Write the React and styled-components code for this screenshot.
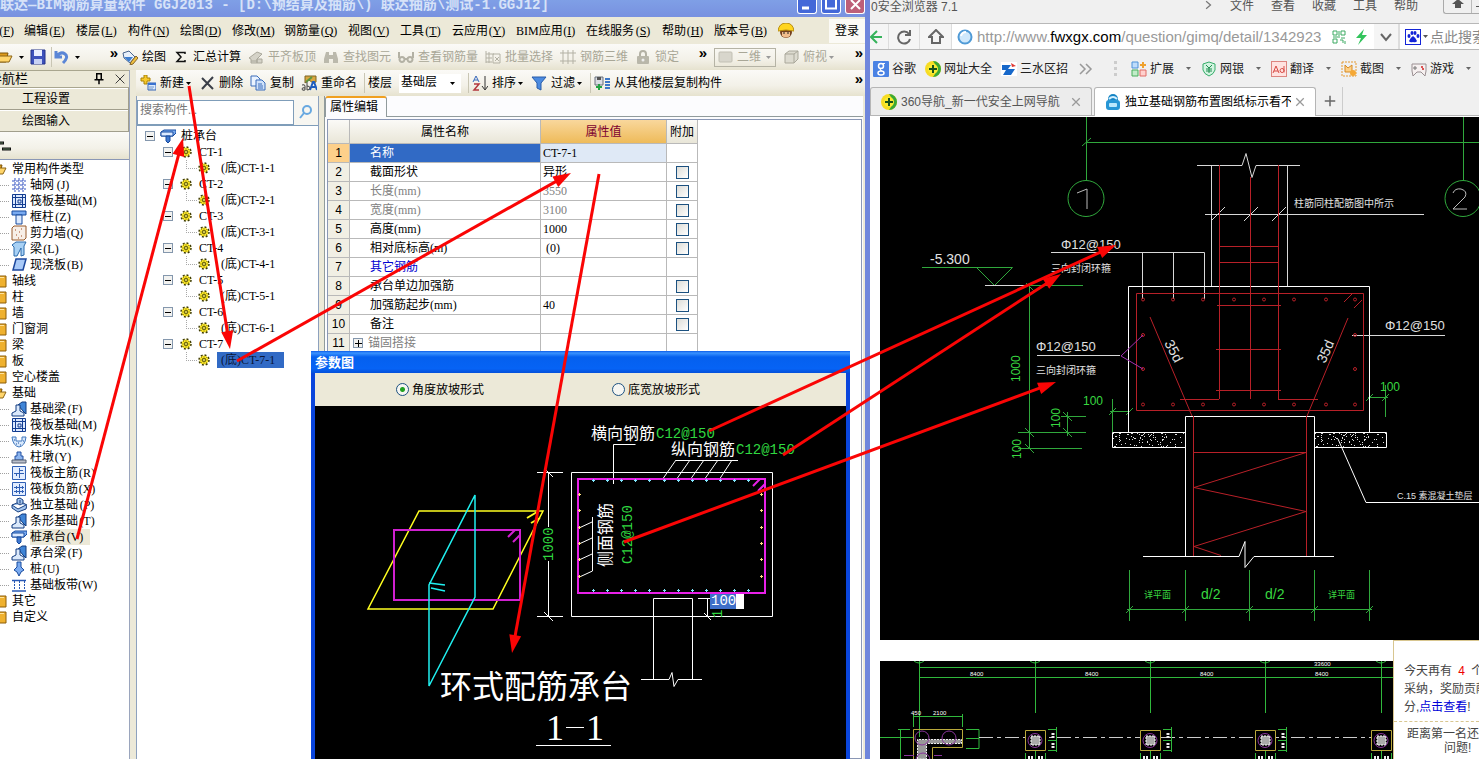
import { useState } from "react";
import styled, { createGlobalStyle, css } from "styled-components";

const GlobalStyle = createGlobalStyle`
	* {
		box-sizing: border-box;
	}
	body {
		margin: 0;
		overflow: hidden;
		font-family: "Liberation Serif", "Noto Sans CJK SC", serif;
		font-size: 12px;
		line-height: 16px;
		color: #000;
	}
	button, input, select {
		font: inherit;
		color: inherit;
	}
	button {
		padding: 0;
		border: 0;
		background: none;
		white-space: nowrap;
	}
	svg {
		display: block;
		flex: none;
	}
`;

const Desktop = styled.div`
	position: relative;
	display: grid;
	grid-template-columns: minmax(0, 870fr) minmax(0, 609fr);
	height: 100vh;
	overflow: hidden;
`;

/* ---------- modelling application ---------- */

const AppWindow = styled.section`
	position: relative;
	display: flex;
	flex-direction: column;
	min-height: 0;
	background: #ece9d8;
	border-right: 5px solid #6f86dc;
	overflow: hidden;
`;
const TitleBar = styled.header`
	display: flex;
	justify-content: space-between;
	flex: none;
	height: 17px;
	background: linear-gradient(#7f9fe6, #7891e0);
	overflow: hidden;
`;
const TitleText = styled.div`
	font: bold 14px/10px "Liberation Mono", "Noto Sans CJK SC", monospace;
	color: #d6e2f8;
	white-space: nowrap;
`;
const CaptionButtons = styled.div`
	display: flex;
	gap: 4px;
`;
const CaptionButton = styled.button`
	display: flex;
	justify-content: center;
	width: 20px;
	height: 14px;
	border: 1px solid #fff;
	border-top: 0;
	border-radius: 0 0 3px 3px;
	background: ${(p) => (p.$close ? "#bd5f78" : "#4468d8")};
`;
const MenuBar = styled.nav`
	display: flex;
	flex: none;
	align-items: center;
	gap: 10px;
	height: 27px;
	background: #ece9d8;
	overflow: hidden;
`;
const MenuItem = styled.button`
	display: flex;
	flex: none;
	width: ${(p) => p.$units * 6}px;
`;
const Mnemonic = styled.span`
	width: 18px;
	text-align: center;
`;
const FirstMenu = styled(MenuItem)`
	justify-content: flex-end;
	width: 14px;
`;
const Login = styled.button`
	height: 24px;
	margin-left: auto;
	padding: 0 6px;
	background: #fbfaf6;
`;
const Strip = styled.div`
	display: flex;
	flex: none;
	align-items: center;
	height: 26px;
	background: linear-gradient(#fbfaf7, #f3f1e8 60%, #e6e2cf);
	white-space: nowrap;
	overflow: hidden;
`;
const QuickTools = styled.div`
	display: flex;
	align-items: center;
	gap: 5px;
	width: 118px;
`;
const MainTools = styled.div`
	display: flex;
	flex: 1;
	align-items: center;
	gap: 7px;
	padding: 0 2px 0 4px;
`;
const Tool = styled.button`
	display: flex;
	align-items: center;
	gap: 4px;
	color: ${(p) => (p.disabled ? "#a9a797" : "#000")};
`;
const ToolCaret = styled.span`
	margin-left: -3px;
`;
const More = styled.button`
	margin-left: auto;
	padding-bottom: 8px;
	font: bold 15px/12px "Liberation Sans", sans-serif;
`;
const Separator = styled.i`
	width: 1px;
	height: 20px;
	margin-right: -4px;
	background: #c9c6b4;
`;
const ViewBox = styled(Tool)`
	height: 19px;
	padding: 0 3px 0 2px;
	border: 1px solid #b5b3a5;
`;
const FloorSelect = styled.select`
	width: 62px;
	height: 19px;
	padding: 0 0 3px 2px;
	border: 0;
	border-radius: 0;
	background: #fff;
	appearance: none;
`;
const FloorWrap = styled.span`
	display: flex;
	align-items: center;
	background: #fff;

	svg {
		margin-left: -12px;
		margin-right: 5px;
		pointer-events: none;
	}
`;
const Body = styled.div`
	display: flex;
	flex: 1;
	min-height: 0;
`;

const Nav = styled.aside`
	display: flex;
	flex-direction: column;
	width: 130px;
	border-right: 1px solid #9aa5bd;
	background: #ece9d8;
	white-space: nowrap;
	overflow: hidden;
`;
const NavTitle = styled.div`
	display: flex;
	align-items: center;
	height: 18px;
	padding-right: 4px;
	border: 1px solid #a9a68f;
	border-width: 1px 0 1px 0;
	font-size: 13px;

	span {
		margin-left: -11px;
	}
	svg:first-of-type {
		margin-left: auto;
		margin-right: 10px;
	}
`;
const NavButton = styled.button`
	height: 22px;
	padding-right: 58px;
	border: 1px solid #a19e8c;
	border-width: 0 1px 1px 0;
	box-shadow: inset 0 1px #fff;
	text-align: right;
`;
const NavStrip = styled(Strip)`
	height: 27px;
`;
const NavList = styled.ul`
	flex: 1;
	margin: 0;
	padding: 1px 0 0;
	list-style: none;
	border-top: 1px solid #8a97b5;
	background: #fff;
`;
const NavRow = styled.li`
	display: flex;
	align-items: center;
	gap: ${(p) => (p.$child ? 3 : 5)}px;
	height: 16px;
`;
const Stub = styled.i`
	width: 9px;
	margin-right: -1px;
	border-top: 1px dotted #a0a0a0;
`;
const NavLabel = styled.button`
	height: 16px;
	padding: 0 ${(p) => (p.$active ? 6 : 1)}px 0 0;
	background: ${(p) => (p.$active ? "#ece9d8" : "transparent")};

	span {
		display: inline-block;
	}
`;

const Work = styled.div`
	display: flex;
	flex: 1;
	flex-direction: column;
	min-width: 0;
	margin-left: 6px;
`;
const Panes = styled.div`
	display: flex;
	flex: 1;
	gap: 5px;
	min-height: 0;
`;
const PartPane = styled.div`
	display: flex;
	flex-direction: column;
	width: 183px;
	border: 1px solid #8da1be;
	border-width: 0 1px;
	background: #fff;
`;
const SearchRow = styled.div`
	display: flex;
	gap: 4px;
	align-items: center;
	height: 30px;
	padding-top: 3px;
	border-bottom: 1px solid #7f9db9;
	background: #f7f6f1;
`;
const SearchInput = styled.input`
	width: 157px;
	height: 25px;
	padding: 0 2px 4px;
	border: 1px solid #7f9db9;
	font-size: 12px;

	&::placeholder {
		color: #777;
	}
`;
const PartTree = styled.ul`
	margin: 0;
	padding: 2px 0 0 8px;
	list-style: none;
`;
const PartRow = styled.li`
	display: flex;
	align-items: center;
	gap: ${(p) => (p.$depth === 0 ? 5 : 7)}px;
	height: 16px;
	padding-left: ${(p) => [0, 18, 41][p.$depth]}px;
`;
const PartLabel = styled.button`
	height: 16px;
	padding: 0 9px 0 ${(p) => (p.$leaf ? 4 : 0)}px;
	${(p) =>
		p.$active &&
		css`
			background: #316ac5;
			color: #0a1638;
		`}
`;
const LeafTwig = styled.i`
	width: 11px;
	height: 9px;
	margin-top: -8px;
	margin-right: -6px;
	border: 1px dotted #a8a8a8;
	border-width: 0 0 1px 1px;
`;

const PropPane = styled.div`
	display: flex;
	flex: 1;
	flex-direction: column;
	min-width: 0;
	margin-right: 2px;
	border-left: 1px solid #919b9c;
	background: #fcfcfe;
`;
const PropTabs = styled.div`
	display: flex;
	height: 21px;
	border-bottom: 1px solid #919b9c;
`;
const PropTab = styled.button`
	height: 21px;
	padding: 0 8px 2px 4px;
	border: 1px solid #919b9c;
	border-top: 2px solid #f0a020;
	border-bottom: 0;
	border-radius: 3px 3px 0 0;
	background: #fcfcfe;
`;
const PropBody = styled.div`
	flex: 1;
	margin: 2px 1px 0 2px;
	border: 1px solid #8a97b5;
	background: #fff;
`;
const PropTable = styled.table`
	width: 370px;
	table-layout: fixed;
	border-collapse: separate;
	border-spacing: 0;

	th, td {
		height: 19px;
		padding: 0 2px;
		border: 1px solid #b9b9b9;
		border-width: 0 1px 1px 0;
		line-height: 16px;
		font-weight: normal;
		white-space: nowrap;
	}
	thead th {
		height: 24px;
		background: linear-gradient(#fbfaf7, #e9e6d8);
	}
	thead th:nth-child(3) {
		background: linear-gradient(#f9d79c, #eebb5a);
		color: #7b0030;
	}
`;
const RowNumber = styled.th`
	background: ${(p) => (p.$active ? "#fdd08a" : "#f1efe4")};
	font-family: "Liberation Sans", sans-serif;
`;
const NameCell = styled.td`
	&& {
		padding-left: ${(p) => (p.$branch ? 3 : 20)}px;
	}
	color: ${(p) => p.$color};
	background: ${(p) => (p.$active ? "#316ac5" : "#fff")};
`;
const ValueCell = styled.td`
	color: ${(p) => p.$color};
	background: ${(p) => (p.$active ? "#dfe9f6" : "#fff")};
`;
const CheckCell = styled.td`
	text-align: center;
`;
const Check = styled.input`
	display: block;
	width: 13px;
	height: 13px;
	margin: 0 auto;
	border: 1px solid #1c5180;
	background: linear-gradient(135deg, #dcdcd7, #fff);
	appearance: none;
`;
const Branch = styled.span`
	display: flex;
	align-items: center;
	gap: 5px;
`;

const Dialog = styled.section`
	position: absolute;
	top: 351px;
	left: 311px;
	bottom: 0;
	display: flex;
	flex-direction: column;
	width: 539px;
	border: solid #0a45dc;
	border-width: 0 4px;
`;
const DialogTitle = styled.h2`
	flex: none;
	height: 22px;
	margin: 0 -4px;
	padding-left: 4px;
	background: linear-gradient(#0b5be8 0, #3a93ff 2px, #0560ee 6px, #0663f5 80%, #0550da);
	color: #fff;
	font-size: 13px;
	line-height: 24px;
`;
const ModeRow = styled.div`
	display: grid;
	grid-template-columns: 216px auto;
	align-items: center;
	flex: none;
	height: 33px;
	padding-left: 81px;
	background: #ece9d8;
`;
const RadioLabel = styled.label`
	display: flex;
	align-items: center;
	gap: 3px;
`;
const Radio = styled.input`
	width: 13px;
	height: 13px;
	margin: 0;
	border: 1px solid #1c5180;
	border-radius: 50%;
	background: #f6f6f2;
	appearance: none;

	&:checked {
		background: radial-gradient(#21a121 0 2px, #f6f6f2 3px);
	}
`;
const Canvas = styled.div`
	position: relative;
	flex: 1;
	background: #000;
	overflow: hidden;
`;
const InlineEdit = styled.input`
	position: absolute;
	top: 188px;
	left: 395px;
	width: 34px;
	height: 15px;
	padding: 0 1px;
	border: 0;
	background: linear-gradient(90deg, #3f6fc8 26px, #fff 26px);
	color: #fff;
	font: 14px/15px "Liberation Mono", monospace;
`;

const mono = '"Liberation Mono", "Noto Sans CJK SC", monospace';
const cad = '"Liberation Sans Narrow", "Liberation Sans", "Noto Sans CJK SC", sans-serif';

/* ---------- icons ---------- */

const Icon = ({ children, size = 16 }) => (
	<svg width={size} height={size} viewBox="0 0 16 16" fill="none" aria-hidden="true">
		{children}
	</svg>
);

const Caret = ({ color = "#000" }) => (
	<svg width="7" height="5" viewBox="0 0 7 5" aria-hidden="true">
		<path d="M1 1h5L3.500 4z" fill={color} />
	</svg>
);

const toolIcons = {
	draw: (
		<>
			<path d="M1 4l6-2 6 6-5 6-6-5z" fill="#e8f0fa" stroke="#48648c" />
			<path d="M2 8l9 0-4 5z" fill="#3f7fd0" />
			<path d="M9 13l5-6 2 2-5 6-3 1z" fill="#f0c040" stroke="#87672a" />
		</>
	),
	sum: <path d="M12 5V3.500H4L8 8l-4 4.500h8V11" stroke="#111" strokeWidth="1.500" />,
	flat: <path d="M1 9l8-6 5 2-5 5v4H3v-4zM3 12h6M9 10h5v4H9z" fill="#d5d3c8" stroke="#aaa89b" />,
	find: <path d="M3 3h3v3h4V3h3l2 7v4h-5v-4H6v4H1v-4z" fill="#bbb9ac" />,
	glasses: <path d="M1 3v6M15 3v6M4 8a2.500 2.500 0 100 5 2.500 2.500 0 000-5zM12 8a2.500 2.500 0 100 5 2.500 2.500 0 000-5zM6 10h3" stroke="#b3b1a4" strokeWidth="2" />,
	batch: <path d="M1 2v12M4 3v11M1 5h8M1 9h6M1 13h6M8 5h7v9H8zM10 8l4 4M14 8l-4 4" stroke="#b3b1a4" />,
	grid3d: <path d="M3 1v14M8 1v14M13 1v14M0 4h16M0 12h16" stroke="#b3b1a4" />,
	lock: (
		<>
			<path d="M5 8V5a3 3 0 016 0v3" stroke="#b3b1a4" strokeWidth="2" />
			<rect x="2" y="7" width="12" height="8" rx="1" fill="#b9b7aa" />
			<circle cx="8" cy="11" r="1.500" fill="#eee" />
		</>
	),
	flatview: <rect x="2" y="3" width="13" height="10" rx="1" fill="#d8d6cc" stroke="#c2c0b4" />,
	cube: <path d="M2 5l4-3h9v8l-4 4H2zM2 5h9v9M11 5l4-3" fill="#dddbd0" stroke="#aaa89b" />,
	add: (
		<>
			<path d="M4 0h3v3h3v3H7v3H4V6H1V3h3z" fill="#f7c92a" stroke="#a98205" />
			<path d="M8 8h8v7H8z" fill="#dcebff" stroke="#3565b5" />
			<path d="M8 8h8v2H8z" fill="#3a72cf" />
			<path d="M9 12h5M9 14h4" stroke="#7095c8" />
		</>
	),
	remove: <path d="M3 3l11 11M14 2L3 14" stroke="#3b3f48" strokeWidth="2" />,
	copy: (
		<>
			<path d="M1 1h6l3 3v7H1z" fill="#eaf3ff" stroke="#3a6dbb" />
			<path d="M6 5h6l3 3v7H6z" fill="#cfe1fa" stroke="#3a6dbb" />
			<path d="M8 9h4M8 11h5M8 13h5" stroke="#3a6dbb" />
		</>
	),
	rename: (
		<>
			<path d="M4 1h11v6l-3 1-4-3-4 3z" fill="#d9a740" stroke="#7c6424" />
			<path d="M5 7l6-5" stroke="#5c9640" strokeWidth="2" />
			<path d="M9 15l3-8h1l3 8M10 12h4" stroke="#1e5cc0" strokeWidth="2" />
			<path d="M1 10q3-1 3 1v4q-3 1-3-1t3-1M6 7v8q3 0 3-2t-3-2" stroke="#444" />
		</>
	),
	sort: (
		<>
			<path d="M1 7l3-6 3 6M2 5h4" stroke="#3768bb" />
			<path d="M2 9h5l-5 6h5" stroke="#b3373e" strokeWidth="1.500" />
			<path d="M13 1v13M10 11l3 4 3-4" stroke="#333" />
		</>
	),
	filter: <path d="M1 2h14l-5 6v7l-4-2V8z" fill="#4c8be0" stroke="#285caa" />,
	floors: (
		<>
			<path d="M1 2h8v8H1z" fill="#d9dce2" stroke="#68707d" />
			<path d="M3 2h4v3H3z" fill="#555" />
			<path d="M11 4h5M11 7h5M11 10h5M11 13h5" stroke="#3c78c8" strokeWidth="2" />
			<path d="M5 9v6M2 12h6" stroke="#23a243" strokeWidth="2" />
		</>
	),
};

const partIcons = {
	open: (
		<>
			<path d="M0 4h11l-2 9H0z" fill="#dd9a1b" stroke="#7d5408" />
			<path d="M0 7h15l-3 6H0z" fill="#ffd56b" stroke="#8c6414" />
		</>
	),
	folder: (
		<>
			<path d="M0 3h15v11H0z" fill="#efb12f" stroke="#8c5d08" />
			<path d="M0 4.500h13" stroke="#ffe29a" />
		</>
	),
	axis: <path d="M1 4h14M1 8h14M1 12h14M4 1v14M8 1v14M12 1v14" stroke="#3350c0" strokeDasharray="3 1" />,
	raft: <path d="M1.500 1.500h13v13h-13zM4.500 2v12M11.500 2v12M2 4.500h12M2 11.500h12M7 7h3v3H7z" fill="#dce9ff" stroke="#123c90" />,
	column: (
		<>
			<path d="M1 2h14v4H1z" fill="#79aaf0" stroke="#174a9e" />
			<path d="M5 6h6v9H5z" fill="#dceaff" stroke="#174a9e" />
		</>
	),
	wall: (
		<>
			<path d="M1 3l2-2h12v12l-2 2H1z" fill="#f7efe8" stroke="#985b2c" />
			<path d="M4 5h1M8 7h1M5 10h1M10 4h1M10 11h1M7 13h1" stroke="#a34a20" />
		</>
	),
	beam: <path d="M1 4l4-3h10l-2 4v9l-3 1V7L6 15H3V6z" fill="#a8d1f5" stroke="#2a6aab" />,
	slab: <path d="M5 2h10l-3 11H2z" fill="#a9caf8" stroke="#1c479d" strokeWidth="1.500" />,
	strip: (
		<>
			<path d="M7 4l4-3h4v12l-3-3z" fill="#3f84d6" stroke="#113b80" />
			<path d="M1 15v-3l4-2V4h4v6l4 2v3z" fill="#dbe9fb" stroke="#113b80" />
		</>
	),
	pit: (
		<>
			<path d="M1 4h4v4h6V4h4q-1 9-7 10Q2 13 1 4z" fill="#d7e8fc" stroke="#3f77bd" />
			<path d="M3 7h1M5 11h1M9 12h1M12 8h1M7 10h1" stroke="#1d4f9d" />
		</>
	),
	pier: (
		<>
			<path d="M6 3h4v4h2v4H4V7h2z" fill="#8cb5ef" stroke="#2251a3" />
			<path d="M1 11h14v3H1z" fill="#bbc0cb" stroke="#555f72" />
		</>
	),
	rebar: (
		<>
			<path d="M1.500 1.500h13v13h-13z" fill="#e2edff" stroke="#2f5fb4" />
			<path d="M3 8.500h10M8.500 3v10M5.500 8v3M8 5.500h4" stroke="#2f5fb4" />
		</>
	),
	rebar2: (
		<>
			<path d="M1.500 1.500h13v13h-13z" fill="#e2edff" stroke="#2f5fb4" />
			<path d="M3 6.500h10M3 10.500h10M8.500 3v10M5.500 5v3M11.500 5v3M5.500 9v3M11.500 9v3" stroke="#2f5fb4" />
		</>
	),
	isolated: <path d="M1 8l5-2V2l3-1 3 2v3l4 2-1 4-8 3-6-4zM1 8l6 4 8-4M6 6l3 2 3-2M9 3v4" fill="#a4c6ef" stroke="#173f80" />,
	cap: (
		<>
			<path d="M1 4l3-2h12v3l-3 3H1z" fill="#79aaf0" stroke="#174a9e" />
			<path d="M1 4h12v4H1z" fill="#dceaff" stroke="#174a9e" />
			<path d="M6 8h4v5l-2 2-2-2z" fill="#3f78d0" stroke="#174a9e" />
		</>
	),
	pile: <path d="M6 1h4v5l3 3-3 2-2 4-2-4-3-2 3-3z" fill="#79aaf0" stroke="#174a9e" />,
	band: (
		<>
			<path d="M1 3.500h14M1 14h14" stroke="#2858b4" strokeWidth="1.500" />
			<path d="M3.500 4v9M8.500 4v9M13.500 4v9" stroke="#2858b4" strokeDasharray="2 1" />
		</>
	),
};

const Gear = () => (
	<svg width="12" height="12" viewBox="0 0 12 12" aria-hidden="true">
		<circle cx="6" cy="6" r="4.500" fill="#ffe92b" />
		<circle cx="6" cy="6" r="5" fill="none" stroke="#3d3a00" strokeWidth="1.500" strokeDasharray="1.960 1.960" />
		<path d="M6 2v8M2 6h8M3 3l6 6M9 3L3 9" stroke="#8a8400" strokeWidth=".7" />
		<circle cx="6" cy="6" r="1.500" fill="#fff36d" stroke="#3d3a00" strokeWidth=".8" />
	</svg>
);

const Toggle = ({ plus }) => (
	<svg width="10" height="10" viewBox="0 0 10 10" aria-hidden="true">
		<rect x=".5" y=".5" width="9" height="9" fill="#f2f2f0" stroke="#8497ad" />
		<path d={plus ? "M2 5.500h7M5.500 2v7" : "M2 5.500h6"} stroke="#000" />
	</svg>
);

/* ---------- data ---------- */

const menus = [
	["编辑", "E", 7], ["楼层", "L", 7], ["构件", "N", 7], ["绘图", "D", 7], ["修改", "M", 7],
	["钢筋量", "Q", 9], ["视图", "V", 7], ["工具", "T", 7], ["云应用", "Y", 9],
	["BIM应用", "I", 10], ["在线服务", "S", 11], ["帮助", "H", 7], ["版本号", "B", 9],
];

const mainTools = [
	["draw", "绘图"], ["sum", "汇总计算"], ["flat", "平齐板顶", true], ["find", "查找图元", true],
	["glasses", "查看钢筋量", true], ["batch", "批量选择", true], ["grid3d", "钢筋三维", true],
	["lock", "锁定", true],
];

// [icon, label, shortcut]
const navItems = [
	["open", "常用构件类型"], ["axis", "轴网", "J"], ["raft", "筏板基础", "M"], ["column", "框柱", "Z"],
	["wall", "剪力墙", "Q"], ["beam", "梁", "L"], ["slab", "现浇板", "B"], ["folder", "轴线"],
	["folder", "柱"], ["folder", "墙"], ["folder", "门窗洞"], ["folder", "梁"], ["folder", "板"],
	["folder", "空心楼盖"], ["open", "基础"], ["strip", "基础梁", "F"], ["raft", "筏板基础", "M"],
	["pit", "集水坑", "K"], ["pier", "柱墩", "Y"], ["rebar", "筏板主筋", "R"], ["rebar2", "筏板负筋", "X"],
	["isolated", "独立基础", "P"], ["strip", "条形基础", "T"], ["cap", "桩承台", "V"],
	["strip", "承台梁", "F"], ["pile", "桩", "U"], ["band", "基础板带", "W"], ["folder", "其它"],
	["folder", "自定义"],
];

const properties = [
	["名称", "CT-7-1", false], ["截面形状", "异形", true], ["长度(mm)", "3550", true, "#808080"],
	["宽度(mm)", "3100", true, "#808080"], ["高度(mm)", "1000", true], ["相对底标高(m)", "\u00a0(0)", true],
	["其它钢筋", "", false, "#0000d0"], ["承台单边加强筋", "", true], ["加强筋起步(mm)", "40", true],
	["备注", "", true], ["锚固搭接", "", false, "#808080"],
];

/* ---------- parts of the application window ---------- */

const NavPanel = () => (
	<Nav>
		<NavTitle>
			<span>导航栏</span>
			<Icon size={12}>
				<path d="M4 1h8M5 1v8M11 1v8M2 9h12M8 9v6" stroke="#000" strokeWidth="2" />
			</Icon>
			<Icon size={10}>
				<path d="M1 1l14 14M15 1L1 15" stroke="#333" strokeWidth="1.500" />
			</Icon>
		</NavTitle>
		<NavButton>工程设置</NavButton>
		<NavButton>绘图输入</NavButton>
		<NavStrip>
			<svg width="12" height="14" viewBox="0 0 12 14">
				<path d="M0 4h4M2 10h9" stroke="#111" strokeWidth="3" />
				<path d="M0 4h3M3 10h7" stroke="#5a7a5a" strokeWidth="1" />
			</svg>
		</NavStrip>
		<NavList>
			{navItems.map(([icon, label, key], i) => (
				<NavRow key={i} $child={!!key}>
					{key ? <Stub /> : null}
					{key ? (
						<Icon>{partIcons[icon]}</Icon>
					) : (
						<svg width="7" height="16" viewBox="9 0 7 16">{partIcons[icon]}</svg>
					)}
					<NavLabel $active={key === "V"}>
						{label}
						{key ? <Mnemonic>({key})</Mnemonic> : null}
					</NavLabel>
				</NavRow>
			))}
		</NavList>
	</Nav>
);

const PartList = () => (
	<PartPane>
		<SearchRow>
			<SearchInput placeholder="搜索构件..." aria-label="搜索构件" />
			<Icon>
				<circle cx="9" cy="6" r="4" stroke="#68a8e0" strokeWidth="2" />
				<path d="M6 9l-4 5" stroke="#68a8e0" strokeWidth="2" />
			</Icon>
		</SearchRow>
		<PartTree>
			<PartRow $depth={0}>
				<Toggle />
				<Icon>{partIcons.cap}</Icon>
				<PartLabel>桩承台</PartLabel>
			</PartRow>
			{[1, 2, 3, 4, 5, 6, 7].map((n) => [
				<PartRow key={n} $depth={1}>
					<Toggle />
					<Gear />
					<PartLabel>CT-{n}</PartLabel>
				</PartRow>,
				<PartRow key={`${n}-1`} $depth={2}>
					<LeafTwig />
					<Gear />
					<PartLabel $leaf $active={n === 7}>(底)CT-{n}-1</PartLabel>
				</PartRow>,
			])}
		</PartTree>
	</PartPane>
);

const PropertyEditor = () => (
	<PropPane>
		<PropTabs>
			<PropTab>属性编辑</PropTab>
		</PropTabs>
		<PropBody>
			<PropTable>
				<colgroup>
					<col style={{ width: 22 }} />
					<col style={{ width: 191 }} />
					<col style={{ width: 126 }} />
					<col style={{ width: 31 }} />
				</colgroup>
				<thead>
					<tr>
						<th />
						<th>属性名称</th>
						<th>属性值</th>
						<th>附加</th>
					</tr>
				</thead>
				<tbody>
					{properties.map(([name, value, check, color = "#000"], i) => (
						<tr key={name}>
							<RowNumber $active={i === 0}>{i + 1}</RowNumber>
							<NameCell $active={i === 0} $color={i === 0 ? "#fff" : color} $branch={i === 10}>
								{i === 10 ? (
									<Branch>
										<Toggle plus />
										{name}
									</Branch>
								) : (
									name
								)}
							</NameCell>
							<ValueCell $active={i === 0} $color={color}>{value}</ValueCell>
							<CheckCell>{check ? <Check type="checkbox" aria-label={`附加 ${name}`} /> : null}</CheckCell>
						</tr>
					))}
				</tbody>
			</PropTable>
		</PropBody>
	</PropPane>
);

const topDots = [593, 607, 621, 635, 649, 664, 678, 692, 706, 720, 734, 748];
const sideDots = [494, 510, 527, 543, 559, 576];

const SectionDrawing = () => (
	<svg width="531" height="353" viewBox="315 406 531 353" fill="none">
		<path d="M419 511h124l-50 98H368z" stroke="#ffff20" strokeWidth="1.500" />
		<path d="M527 518l10-6M531 523l9-5" stroke="#ffff20" strokeWidth="2" />
		<path d="M394 530h126v70H394z" stroke="#d020d0" strokeWidth="2" />
		<path d="M508 537l7-7M513 542l7-7" stroke="#d020d0" strokeWidth="2" />
		<path d="M429 585v101l46-89V495zM429 583l16 2M431 588l14 3" stroke="#20f0f0" strokeWidth="1.500" />
		<g stroke="#fff">
			<path d="M571.500 472.500h201v144h-201z" />
			<path d="M537 472.500h26M537 616.500h26M548.500 473v54M548.500 561v55M544 468l9 9M544 612l9 9" />
			<path d="M613.500 484v-39.500h22" />
			<path d="M738 460.500h-62M676 460l-14 20M690 460l-14 20M704 460l-14 20M718 460l-14 20M732 460l-13 20" />
			<path d="M592.500 517v54l-13 6M592 522l-13 6M592 538l-13 6M592 554l-13 6" />
			<path d="M653.500 679v-80.500h39V679M641 679.500h28l3-7 2 14 4-7h24" />
			<path d="M698 598.500h12M707.500 599v17M704 613l7 7" />
			<path d="M536 745.500h75" />
		</g>
		<path d="M578 479h187v114H578z" stroke="#e820e8" strokeWidth="2" />
		<path d="M753 486l7-7M758 491l7-7" stroke="#e820e8" strokeWidth="2" />
		{topDots.map((x) => (
			<path key={x} d={`M${x - 1} 480.500h3M${x - 1} 590.500h3M${x + 0.5} 479v3M${x + 0.5} 589v3`} stroke="#80e8ff" />
		))}
		{sideDots.map((y) => (
			<path key={y} d={`M578 ${y + 0.5}h3M760 ${y + 0.5}h3M579.500 ${y - 1}v3M761.500 ${y - 1}v3`} stroke="#ffe080" />
		))}
		<g fontFamily={mono} fontSize="16" fill="#fff">
			<text x="591" y="439">横向钢筋</text>
			<text x="671" y="455">纵向钢筋</text>
			<text transform="translate(611 567) rotate(-90)">侧面钢筋</text>
		</g>
		<g fontFamily={mono} fontSize="14" fill="#30d840">
			<text x="656" y="438">C12@150</text>
			<text x="736" y="454">C12@150</text>
			<text transform="translate(632 564) rotate(-90)">C12@150</text>
			<text transform="translate(553 561) rotate(-90)">1000</text>
			<text transform="translate(722 618) rotate(-90)">1</text>
		</g>
		<text x="440" y="698" fontFamily={mono} fontSize="32" fill="#fff">环式配筋承台</text>
		<text x="546" y="740" fontFamily='"Liberation Serif", serif' fontSize="36" fill="#fff">1</text>
		<path d="M566 727.500h18" stroke="#fff" />
		<text x="586" y="740" fontFamily='"Liberation Serif", serif' fontSize="36" fill="#fff">1</text>
	</svg>
);

const ParameterDialog = () => {
	const [mode, setMode] = useState("angle");

	return (
		<Dialog>
			<DialogTitle>参数图</DialogTitle>
			<ModeRow>
				<RadioLabel>
					<Radio type="radio" name="slope" checked={mode === "angle"} onChange={() => setMode("angle")} />
					角度放坡形式
				</RadioLabel>
				<RadioLabel>
					<Radio type="radio" name="slope" checked={mode === "width"} onChange={() => setMode("width")} />
					底宽放坡形式
				</RadioLabel>
			</ModeRow>
			<Canvas>
				<SectionDrawing />
				<InlineEdit defaultValue="100" aria-label="尺寸" />
			</Canvas>
		</Dialog>
	);
};

const Modeller = () => (
	<AppWindow>
		<TitleBar>
			<TitleText>联达—BIM钢筋算量软件 GGJ2013 - [D:\预结算及抽筋\) 联达抽筋\测试-1.GGJ12]</TitleText>
			<CaptionButtons>
				<CaptionButton aria-label="最小化">
					<svg width="18" height="13"><path d="M4 8h7" stroke="#fff" strokeWidth="3" /></svg>
				</CaptionButton>
				<CaptionButton aria-label="最大化">
					<svg width="18" height="13"><path d="M4 0v8.500h10V0" fill="none" stroke="#fff" strokeWidth="2" /></svg>
				</CaptionButton>
				<CaptionButton $close aria-label="关闭">
					<svg width="18" height="13"><path d="M5 0l9 9M14 0L5 9" stroke="#fff" strokeWidth="2" /></svg>
				</CaptionButton>
			</CaptionButtons>
		</TitleBar>
		<MenuBar>
			<FirstMenu>(<u>F</u>)</FirstMenu>
			{menus.map(([label, key, units]) => (
				<MenuItem key={label} $units={units}>
					{label}
					<Mnemonic>(<u>{key}</u>)</Mnemonic>
				</MenuItem>
			))}
			<Icon>
				<circle cx="8" cy="9" r="6" fill="#74401e" />
				<path d="M4 9h8v4q-4 3-8 0z" fill="#f1bd8d" />
				<path d="M0 8Q1 0 8 0t8 8Q8 6 0 8z" fill="#ffd51e" stroke="#b88e10" />
				<path d="M5 10h2M9 10h2" stroke="#222" />
			</Icon>
			<Login>登录</Login>
		</MenuBar>
		<Strip>
			<QuickTools>
				<svg width="13" height="16" viewBox="3 0 13 16">{partIcons.open}</svg>
				<Caret />
				<Icon>
					<path d="M1 1h14v14H1z" fill="#3d51bb" stroke="#25338a" />
					<path d="M4 1h8v6H4z" fill="#e8edff" />
					<path d="M4 10h8v5H4z" fill="#c8d1f4" />
				</Icon>
				<Separator />
				<Icon>
					<path d="M3 2v6h6M4 7q4-5 8-2t-2 9" stroke="#5b86d6" strokeWidth="3" />
				</Icon>
				<Caret />
				<More>»</More>
			</QuickTools>
			<MainTools>
				{mainTools.map(([icon, label, disabled]) => (
					<Tool key={icon} disabled={disabled}>
						<Icon>{toolIcons[icon]}</Icon>
						{label}
					</Tool>
				))}
				<More>»</More>
				<ViewBox disabled>
					<Icon>{toolIcons.flatview}</Icon>
					二维
					<Caret color="#999" />
				</ViewBox>
				<Tool disabled>
					<Icon>{toolIcons.cube}</Icon>
					俯视
					<ToolCaret><Caret color="#999" /></ToolCaret>
				</Tool>
				<More>»</More>
			</MainTools>
		</Strip>
		<Body>
			<NavPanel />
			<Work>
				<Strip>
					<MainTools>
						<Tool><Icon>{toolIcons.add}</Icon>新建<ToolCaret><Caret /></ToolCaret></Tool>
						<Tool><Icon>{toolIcons.remove}</Icon>删除</Tool>
						<Tool><Icon>{toolIcons.copy}</Icon>复制</Tool>
						<Tool><Icon>{toolIcons.rename}</Icon>重命名</Tool>
						<Separator />
						<label htmlFor="floor">楼层</label>
						<FloorWrap>
							<FloorSelect id="floor">
								<option>基础层</option>
							</FloorSelect>
							<Caret />
						</FloorWrap>
						<Separator />
						<Tool><Icon>{toolIcons.sort}</Icon>排序<ToolCaret><Caret /></ToolCaret></Tool>
						<Tool><Icon>{toolIcons.filter}</Icon>过滤<ToolCaret><Caret /></ToolCaret></Tool>
						<Separator />
						<Tool><Icon>{toolIcons.floors}</Icon>从其他楼层复制构件</Tool>
						<More>»</More>
					</MainTools>
				</Strip>
				<Panes>
					<PartList />
					<PropertyEditor />
				</Panes>
			</Work>
		</Body>
		<ParameterDialog />
	</AppWindow>
);

/* ---------- browser ---------- */

const Browser = styled.section`
	position: relative;
	display: flex;
	flex-direction: column;
	min-width: 0;
	background: #f0f0f0;
	font-family: "Liberation Sans", "Noto Sans CJK SC", sans-serif;
	white-space: nowrap;
	overflow: hidden;
`;
const BrowserTop = styled.header`
	display: flex;
	flex: none;
	height: 23px;
	padding-left: 1px;
	line-height: 15px;
	color: #555;
	overflow: hidden;
`;
const BrowserMenus = styled.nav`
	display: flex;
	flex: none;
	gap: 17px;
	margin-left: auto;
	line-height: 12px;
	align-items: flex-start;
`;
const TopButtons = styled.div`
	display: flex;
	flex: none;
	width: 36px;
	height: 14px;
	margin-left: 25px;
	border: 1px solid #aaa;
	border-width: 0 0 1px 1px;
	border-radius: 0 0 0 3px;
`;
const AddressBar = styled.div`
	display: flex;
	flex: none;
	height: 27px;
	border: 1px solid #b8b8b8;
	border-width: 1px 0;
	background: #fff;
	overflow: hidden;
`;
const AddressButton = styled.button`
	display: flex;
	flex: none;
	align-items: center;
	justify-content: ${(p) => (p.$first ? "flex-start" : "center")};
	width: ${(p) => p.$width}px;
	border-right: 1px solid #ddd;
	background: #f5f5f5;
`;
const Url = styled.div`
	display: flex;
	flex: 1;
	align-items: center;
	gap: 4px;
	min-width: 0;
	padding-left: 5px;
	color: #999;
	font-size: 15px;

	span {
		flex: 1;
		overflow: hidden;
	}
	b {
		color: #000;
		font-weight: normal;
	}
`;
const UrlIcons = styled.div`
	display: flex;
	gap: 6px;
	padding-right: 5px;
`;
const SearchBox = styled.label`
	display: flex;
	flex: none;
	align-items: center;
	gap: 1px;
	width: 80px;
	padding-left: 5px;
	border-left: 1px solid #ddd;

	input {
		flex: none;
		width: 60px;
		padding: 0;
		border: 0;
		font-size: 14px;
	}
	input::placeholder {
		color: #888;
	}
`;
const Bookmarks = styled.nav`
	display: flex;
	flex: none;
	align-items: center;
	gap: 9px;
	height: 37px;
	padding-left: 3px;
	color: #222;
`;
const Bookmark = styled.button`
	display: flex;
	flex: none;
	align-items: center;
	gap: 3px;
	${(p) =>
		p.$wide &&
		css`
			width: 61px;

			svg:last-child {
				margin-left: auto;
			}
		`}
`;
const Dots = styled.i`
	width: 3px;
	height: 15px;
	margin: 0 5px 0 12px;
	border-left: 3px dotted #ccc;
`;
const TabStrip = styled.div`
	display: flex;
	flex: none;
	align-items: flex-end;
	gap: 2px;
	height: 29px;
	border-bottom: 1px solid #b5b5b5;
`;
const Tab = styled.button`
	display: flex;
	align-items: center;
	gap: 4px;
	width: 222px;
	height: ${(p) => (p.$active ? 29 : 28)}px;
	margin-bottom: ${(p) => (p.$active ? -1 : 0)}px;
	padding: 0 10px;
	border: 1px solid #b5b5b5;
	border-bottom: 0;
	border-radius: 3px 3px 0 0;
	background: ${(p) => (p.$active ? "#fff" : "#ececec")};
	color: ${(p) => (p.$active ? "#000" : "#555")};

	span {
		flex: 1;
		text-align: left;
		overflow: hidden;
	}
`;
const NewTab = styled.button`
	display: flex;
	align-items: center;
	justify-content: center;
	width: 25px;
	height: 28px;
	border-right: 1px solid #ccc;
`;
const Page = styled.main`
	flex: 1;
	min-height: 0;
	padding: 1px 0 0 10px;
	background: #fff;
	overflow: hidden;
`;
const Figure = styled.div`
	margin-bottom: 21px;
	background: #000;
	overflow: hidden;
`;
const Notice = styled.aside`
	position: absolute;
	right: 0;
	bottom: 0;
	width: 86px;
	height: 119px;
	border: 1px solid #d8c690;
	border-width: 1px 0 0 1px;
	background: #fff;
	color: #444;
	overflow: hidden;

	p {
		margin: 0;
		padding: 21px 0 5px 10px;
		line-height: 18px;
	}
	p + p {
		padding: 5px 0 0 13px;
		border-top: 1px dashed #d8c690;
		line-height: 14px;
	}
	em {
		padding: 0 3px;
		color: #e00;
		font-style: normal;
	}
	a {
		color: #0000d8;
		text-decoration: none;
	}
`;
const Indent = styled.span`
	padding-left: 37px;
`;

const bookmarkIcons = {
	google: (
		<>
			<rect width="16" height="16" rx="1" fill="#4a82e4" />
			<ellipse cx="8" cy="5" rx="2.500" ry="2.500" stroke="#fff" strokeWidth="1.500" />
			<ellipse cx="8" cy="12" rx="3" ry="2" stroke="#fff" strokeWidth="1.500" />
			<path d="M9 2.500h3M8 7.500l-1 1.500 2 1" stroke="#fff" />
		</>
	),
	safe: (
		<>
			<circle cx="8" cy="8" r="8" fill="#f7dc24" />
			<path d="M8 0a8 8 0 010 16Q15 8 8 0z" fill="#39a935" />
			<circle cx="8" cy="8" r="5" fill="#f9ec32" />
			<path d="M8 4v8M4 8h8" stroke="#17521b" strokeWidth="2" />
		</>
	),
	sanshui: (
		<>
			<rect y="1" width="16" height="14" fill="#fff" />
			<path d="M1 4h9l-3 4h7l-4 6H2l3-5H1z" fill="#1768ca" />
			<path d="M10 2l5 3-4 1z" fill="#e03933" />
		</>
	),
	extend: (
		<>
			<path d="M1 1h6v6H1z" fill="#bfdcfb" stroke="#4d91da" />
			<path d="M1 9h6v6H1z" fill="#c2ecc9" stroke="#48ae5d" />
			<path d="M9 9h6v6H9z" fill="#ffd0cd" stroke="#df6a64" />
			<path d="M12 1v6M9 4h6" stroke="#efa12d" strokeWidth="2" />
		</>
	),
	bank: (
		<>
			<path d="M8 1l6 2v6q-1 4-6 6-5-2-6-6V3z" fill="#d3f4e1" stroke="#36ad6a" />
			<path d="M5 4l3 3 3-3M8 7v5M5 8h6M5 10h6" stroke="#218e50" />
		</>
	),
	translate: (
		<>
			<rect x=".5" y=".5" width="15" height="15" fill="#ffe2e0" stroke="#dd8580" />
			<path d="M2 12l3-7 3 7M3 10h4M13 5v6.500M13 9a2 2 0 10-2 2.500 2 2 0 002-2.500" stroke="#d74b45" />
		</>
	),
	capture: (
		<>
			<path d="M1 1h14v14H1z" stroke="#e59a32" strokeDasharray="2 1" />
			<path d="M4 4l3 3 4-3v7H4z" fill="#ffd084" stroke="#d58a24" />
			<circle cx="12" cy="12" r="3" fill="#f5a835" />
		</>
	),
	game: (
		<>
			<path d="M1 3h14v7l-1 5-4-4H6l-4 4-1-5z" fill="#f6f0f0" stroke="#9a8f92" />
			<path d="M4 5v4M2 7h4" stroke="#777" />
			<path d="M10 6h2M11 8h2" stroke="#da5454" strokeWidth="2" />
		</>
	),
	forum: (
		<>
			<circle cx="8" cy="5" r="5" fill="#1684c4" />
			<rect x="1" y="6" width="14" height="10" rx="3" fill="#2796d5" />
			<path d="M4 5q4-4 8 0" stroke="#d2f0ff" strokeWidth="2" />
			<rect x="4" y="9" width="8" height="4" rx="1" fill="#bce8fc" />
		</>
	),
};

const extras = [
	["extend", "扩展"], ["bank", "网银"], ["translate", "翻译"], ["capture", "截图"], ["game", "游戏"],
];

const rebarX = [1143, 1173, 1203, 1234, 1264, 1294, 1326, 1355];
// scattered aggregate of the concrete bed
const speckles = Array.from({ length: 90 }, (_, i) => [
	Math.floor(Math.abs(Math.sin(i * 12.9898) * 43758.5453) % 71),
	Math.floor(Math.abs(Math.sin(i * 78.233) * 24634.6345) % 14),
]);

const FoundationDetail = () => (
	<svg width="599" height="523" viewBox="880 117 599 523" fill="none" fontFamily={cad}>
		<g stroke="#30a83c">
			<path d="M1086.500 117v63M1086 142.500h393M1463.500 117v63M1082 146l9-8" />
			<circle cx="1086" cy="198.500" r="18" />
			<circle cx="1463" cy="198.500" r="18" />
			<path d="M922 267.500h90.500l-18 18-18-18M1025 285.500h58M1029.500 286v162" />
			<path d="M1018 432.500h68M1018 448.500h64M1061 416.500h25M1067.500 412v24M1026 283l8 8M1025 428l9 9M1025 444l9 9M1063 412l9 9M1063 428l9 9" />
			<path d="M1112.500 399v33M1110 411.500h20M1109 415l7-7M1126 415l7-7M1385.500 385v32M1368 397.500h20M1366 401l7-7M1382 401l7-7" />
			<path d="M1129.500 570v51M1185.500 570v51M1249.500 570v51M1314.500 570v51M1369.500 570v51M1127 609.500h245" />
			<path d="M1126 613l7-7M1182 613l7-7M1246 613l7-7M1311 613l7-7M1366 613l7-7" />
		</g>
		<g stroke="#d8d8d8">
			<path d="M985 285.500h40M1051 252.500h153.500V299M1142.500 252v47M1173.500 252v47M1037 355.500h83" />
			<path d="M1128.500 432V286.500h241V432" stroke="#fff" />
			<path d="M1197 165.500h45l4-12 6 24 4-12h44M1211.500 165v121M1287.500 165v121" />
			<path d="M1205 214.500h219M1211 221l14-14M1244 221l14-14M1272 221l14-14M1352 335.500h93" />
			<path d="M1185.500 556V416.500h129V556M1143 556.500h96l6-15v26l9-11h80" stroke="#fff" />
			<path d="M1112.500 432.500h73v15h-73zM1314.500 432.500h72v15h-72zM1338 439l28 63.500h113" stroke="#fff" />
		</g>
		<g fill="#ddd">
			{speckles.map(([x, y], i) => (
				<path key={i} d={`M${1113 + x} ${433 + y}h1v1h-1zM${1315 + x} ${433 + y}h1v1h-1z`} />
			))}
		</g>
		<g stroke="#b82028">
			<path d="M1136.500 293.500h227v117h-227zM1219.500 165v234M1250.500 177v222M1278.500 165v234" />
			<path d="M1219 246.500h60M1219 262.500h60M1217 305.500h64M1216 349.500h65M1216 390.500h65M1180 399.500h39M1278 399.500h40" />
			<path d="M1150 317l42 99M1348 318l-41 98M1193.500 416v140M1306.500 416v140" />
			<path d="M1193 452.500h113l-112 35 112 24-112 35 27 9M1344 302l8-8M1354 308l8-8" />
			{rebarX.map((x) => (
				<g key={x}>
					<circle cx={x} cy="299.500" r="1.500" />
					<circle cx={x} cy="404.500" r="1.500" />
				</g>
			))}
			<circle cx="1143" cy="335" r="1.500" />
			<circle cx="1143" cy="369" r="1.500" />
			<circle cx="1355" cy="335" r="1.500" />
			<circle cx="1355" cy="369" r="1.500" />
		</g>
		<path d="M1143 335l-22 21 22 13" stroke="#a030b0" />
		<path d="M1077 193l10-4v20" stroke="#bbb" />
		<path d="M1453 193q2-5 8-4 7 2 4 8l-12 12h14" stroke="#bbb" />
		<g fill="#e0e0e0" fontSize="14">
			<text x="930" y="264">-5.300</text>
			<text x="1061" y="249" fontSize="13">Φ12@150</text>
			<text x="1036" y="351" fontSize="13">Φ12@150</text>
			<text x="1385" y="330" fontSize="13">Φ12@150</text>
			<text x="1051" y="272" fontSize="10">三向封闭环箍</text>
			<text x="1036" y="374" fontSize="10">三向封闭环箍</text>
			<text x="1294" y="207" fontSize="10">柱筋同柱配筋图中所示</text>
			<text x="1397" y="499" fontSize="9">C.15 素混凝土垫层</text>
			<text transform="translate(1164 343) rotate(62)">35d</text>
			<text transform="translate(1325 364) rotate(-66)">35d</text>
		</g>
		<g fill="#38d840" fontSize="12">
			<text x="1083" y="405">100</text>
			<text x="1380" y="391">100</text>
			<text transform="translate(1020 382) rotate(-90)">1000</text>
			<text transform="translate(1060 428) rotate(-90)">100</text>
			<text transform="translate(1021 459) rotate(-90)">100</text>
			<text x="1144" y="598" fontSize="9">详平面</text>
			<text x="1328" y="598" fontSize="9">详平面</text>
			<text x="1201" y="599" fontSize="14">d/2</text>
			<text x="1265" y="599" fontSize="14">d/2</text>
		</g>
	</svg>
);

const FoundationPlan = () => (
	<svg width="599" height="98" viewBox="880 661 599 98" fill="none">
		<g stroke="#30b83c">
			<path d="M919.500 661v76M1035.500 661v52M1150.500 661v52M1265.500 661v52M1381.500 661v52M919 667.500h560M919 677.500h560" />
			<path d="M914 661q5 4 10 0M1030 661q5 4 10 0M1145 661q5 4 10 0M1260 661q5 4 10 0M1376 661q5 4 10 0" />
			<path d="M913 716.500h49M913.500 714v13M962.500 714v13M880 737.500h33M898 729.500h12M900.500 729v30M966 729.500h13v19h-13M966 738.500h13" />
		</g>
		<path d="M979 737.500h414" stroke="#ccc" strokeDasharray="14 4 4 4" />
		<path d="M913.500 759v-29.500h49v18H932.500V759" stroke="#b9a83b" />
		<path d="M917.500 759v-19.500h44v4h-35V759z" fill="#999" stroke="#eee" strokeDasharray="2 1" />
		<g stroke="#8a359c">
			<circle cx="922" cy="738" r="7" />
			<circle cx="949" cy="738" r="7" />
			<circle cx="923" cy="760" r="7" />
			<path d="M904 755.500h10M934 755.500h8" />
		</g>
		{[1035, 1150, 1265, 1381].map((x) => (
			<g key={x}>
				<path d={`M${x - 9.5} 730.500h20v20h-20z`} stroke="#b9a83b" fill="#000" />
				<path d={`M${x - 4} 736h9v9h-9z`} fill="#aaa" stroke="#fff" strokeDasharray="2 1" />
				<circle cx={x} cy="740.500" r="7" stroke="#8a359c" />
				<path d={`M${x + 13} 729.500h9M${x + 13} 750.500h9M${x + 13} 740.500h9M${x + 21.5} 727v25M${x - 9.5} 753v6M${x + 10.5} 753v6M${x}.500 751v8`} stroke="#30b83c" />
				<path d={`M${x + 18} 733v5M${x + 18} 743v5M${x - 7} 757.500h5M${x + 3} 757.500h5`} stroke="#eee" strokeWidth="3" strokeDasharray="2 1" />
			</g>
		))}
		<g fill="#fff" fontSize="6" fontFamily={cad}>
			<text x="970" y="676">8400</text>
			<text x="1085" y="676">8400</text>
			<text x="1200" y="676">8400</text>
			<text x="1315" y="676">8400</text>
			<text x="1314" y="666">33600</text>
			<text x="911" y="715">450</text>
			<text x="933" y="715">2100</text>
		</g>
	</svg>
);

const BrowserWindow = () => (
	<Browser>
		<BrowserTop>
			<span>0安全浏览器 7.1</span>
			<BrowserMenus>
				<Icon size={10}><path d="M5 2l7 6-7 6" stroke="#777" strokeWidth="2" /></Icon>
				{["文件", "查看", "收藏", "工具", "帮助"].map((m) => (
					<button key={m}>{m}</button>
				))}
			</BrowserMenus>
			<TopButtons>
				<svg width="36" height="13">
					<path d="M8 4l6-5 6 5h-3v4h-6V4z" fill="#555" />
					<path d="M27.500 0v13" stroke="#bbb" />
					<path d="M32 6.500h4" stroke="#555" />
				</svg>
			</TopButtons>
		</BrowserTop>
		<AddressBar>
			<AddressButton $first $width={19} aria-label="后退">
				<svg width="13" height="16"><path d="M12 8H2M7 2L1 8l6 6" fill="none" stroke="#36b35b" strokeWidth="2" /></svg>
			</AddressButton>
			<AddressButton $width={31} aria-label="刷新">
				<Icon><path d="M13 5a6 6 0 101 5M14 1v5H9" stroke="#666" strokeWidth="2" /></Icon>
			</AddressButton>
			<AddressButton $width={32} aria-label="主页">
				<Icon><path d="M1 8l7-7 7 7h-3v6H4V8z" stroke="#666" strokeWidth="2" /></Icon>
			</AddressButton>
			<Url>
				<Icon>
					<circle cx="8" cy="8" r="6.500" fill="#cfe8fb" stroke="#4f9ad6" strokeWidth="2" />
					<path d="M4 7q1-4 5-4" stroke="#fff" strokeWidth="2" />
				</Icon>
				<span>http://www.<b>fwxgx.com</b>/question/gimq/detail/1342923</span>
				<UrlIcons>
					<Icon>
						<path d="M2 2h4v4H2zM10 2h4v4h-4zM2 10h4v4H2zM8 2v5M2 8h7M10 9h4M9 11h3v3M14 12v3" stroke="#3daa63" />
					</Icon>
					<Icon><path d="M11 0L3 9h5l-3 7 9-10H9z" fill="#32c45c" /></Icon>
				</UrlIcons>
			</Url>
			<AddressButton $width={25} aria-label="展开">
				<Icon><path d="M3 5l5 6 5-6" stroke="#666" strokeWidth="2" /></Icon>
			</AddressButton>
			<SearchBox>
				<Icon>
					<rect x=".5" y=".5" width="15" height="15" fill="#fff" stroke="#1324d7" />
					<ellipse cx="4" cy="7" rx="1.500" ry="2" fill="#1324d7" />
					<ellipse cx="7" cy="4" rx="1.500" ry="2" fill="#1324d7" />
					<ellipse cx="10" cy="4" rx="1.500" ry="2" fill="#1324d7" />
					<ellipse cx="13" cy="7" rx="1.500" ry="2" fill="#1324d7" />
					<path d="M8 7q3 2 4 5-1 2-4 1-3 1-4-1 1-3 4-5z" fill="#1324d7" />
				</Icon>
				<Caret color="#555" />
				<input placeholder="点此搜索" aria-label="搜索" />
			</SearchBox>
		</AddressBar>
		<Bookmarks>
			<Bookmark><Icon>{bookmarkIcons.google}</Icon>谷歌</Bookmark>
			<Bookmark><Icon>{bookmarkIcons.safe}</Icon>网址大全</Bookmark>
			<Bookmark><Icon>{bookmarkIcons.sanshui}</Icon>三水区招</Bookmark>
			<Icon><path d="M3 3l5 5-5 5M9 3l5 5-5 5" stroke="#999" strokeWidth="1.500" /></Icon>
			<Dots />
			{extras.map(([icon, label]) => (
				<Bookmark key={icon} $wide>
					<Icon>{bookmarkIcons[icon]}</Icon>
					{label}
					<Caret color="#666" />
				</Bookmark>
			))}
		</Bookmarks>
		<TabStrip>
			<Tab>
				<Icon>{bookmarkIcons.safe}</Icon>
				<span>360导航_新一代安全上网导航</span>
				<Icon size={10}><path d="M2 2l12 12M14 2L2 14" stroke="#999" strokeWidth="2" /></Icon>
			</Tab>
			<Tab $active>
				<Icon>{bookmarkIcons.forum}</Icon>
				<span>独立基础钢筋布置图纸标示看不</span>
				<Icon size={10}><path d="M2 2l12 12M14 2L2 14" stroke="#999" strokeWidth="2" /></Icon>
			</Tab>
			<NewTab aria-label="新标签">
				<Icon size={12}><path d="M8 1v14M1 8h14" stroke="#666" strokeWidth="2" /></Icon>
			</NewTab>
		</TabStrip>
		<Page>
			<Figure><FoundationDetail /></Figure>
			<Figure><FoundationPlan /></Figure>
		</Page>
		<Notice>
			<p>
				今天再有 <em>4</em> 个<br />采纳，奖励贡献<br />分,<a href="#reward">点击查看</a>!
			</p>
			<p>
				距离第一名还<br /><Indent>问题!</Indent>
			</p>
		</Notice>
	</Browser>
);

/* ---------- red annotation arrows across both windows ---------- */

const ArrowLayer = styled.svg`
	position: absolute;
	top: 0;
	left: 0;
	pointer-events: none;
`;

const arrows = [
	[77, 539, 183, 138], [189, 86, 230, 349], [237, 361, 571, 173], [599, 174, 512, 653],
	[709, 431, 1116, 245], [783, 455, 1061, 274], [624, 542, 1056, 382],
];

const Arrow = ({ points: [x1, y1, x2, y2] }) => {
	const len = Math.hypot(x2 - x1, y2 - y1);
	const angle = (Math.atan2(y2 - y1, x2 - x1) * 180) / Math.PI;

	return (
		<g transform={`translate(${x1} ${y1}) rotate(${angle})`}>
			<path d={`M0 0H${len - 14}`} stroke="#fa0505" strokeWidth="3" />
			<path d={`M${len} 0l-18-6v12z`} fill="#fa0505" />
		</g>
	);
};

function App() {
	return (
		<>
			<GlobalStyle />
			<Desktop>
				<Modeller />
				<BrowserWindow />
				<ArrowLayer width="1479" height="759">
					{arrows.map((a) => (
						<Arrow key={a.join()} points={a} />
					))}
				</ArrowLayer>
			</Desktop>
		</>
	);
}

export default App;
